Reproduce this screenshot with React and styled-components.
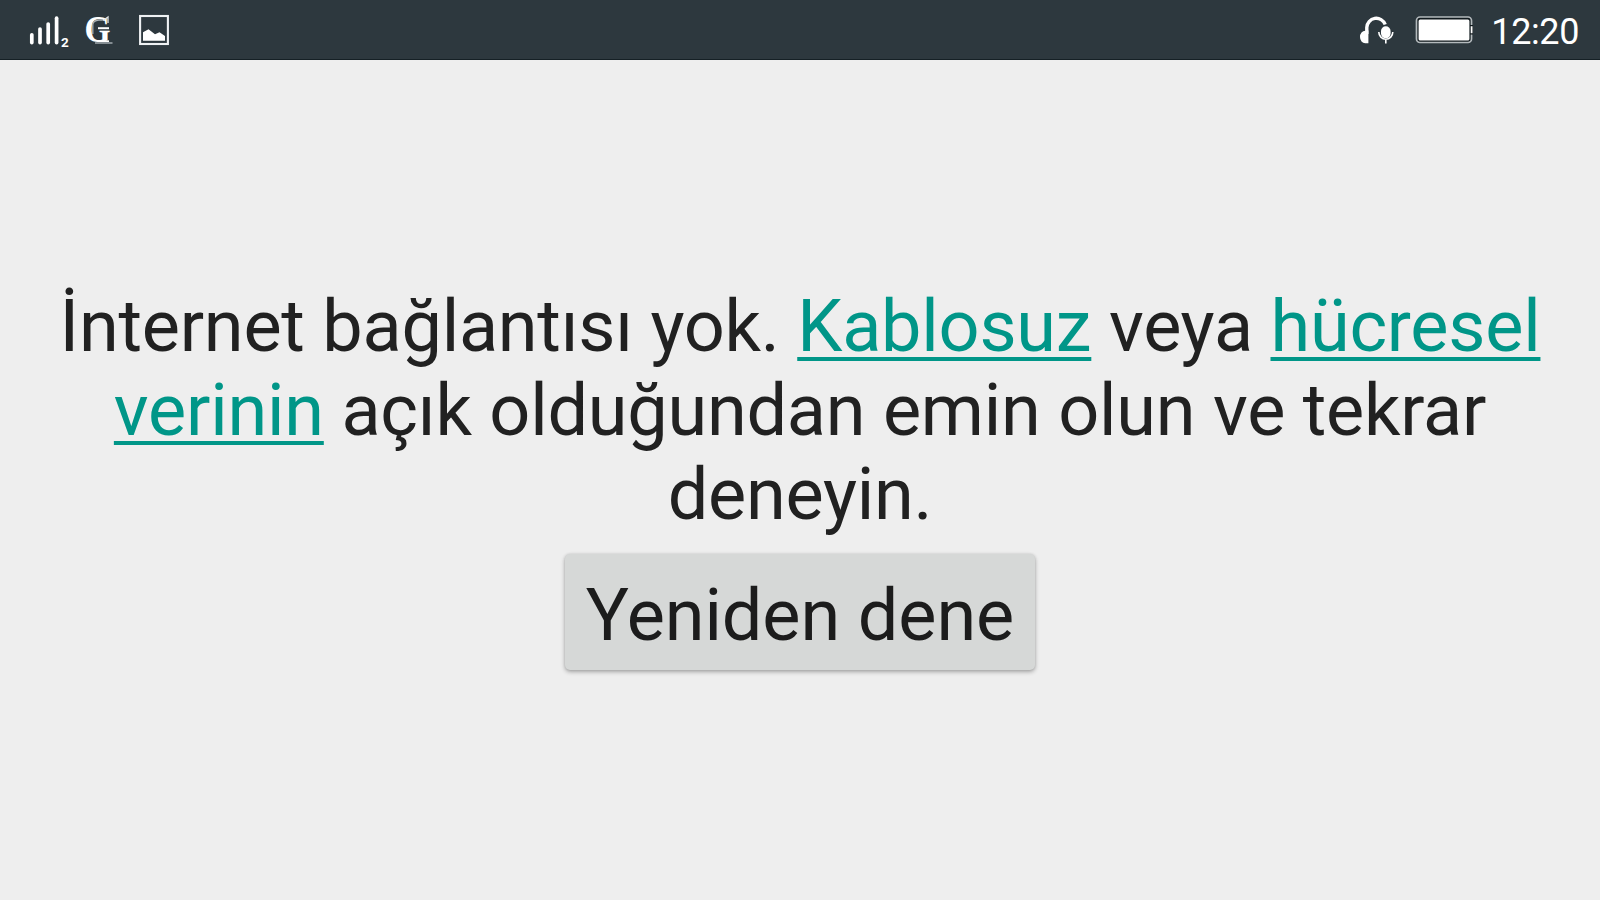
import React from "react";
import styled, { createGlobalStyle } from "styled-components";

export default function App() {
    return <>
        <GlobalStyle />
        <Screen>
            <StatusBar>
                <Notifications>
                    <SignalIcon />
                    <LogoIcon />
                    <PictureIcon />
                </Notifications>
                <System>
                    <HeadsetIcon />
                    <BatteryIcon />
                    <Clock>12:20</Clock>
                </System>
            </StatusBar>
            <Content>
                <Message>
                    İnternet bağlantısı yok. <Link href="#wifi">Kablosuz</Link> veya <Link href="#mobile">hücresel verinin</Link> açık olduğundan emin olun ve tekrar deneyin.
                </Message>
                <RetryButton type="button">Yeniden dene</RetryButton>
            </Content>
        </Screen>
    </>
}

function SignalIcon() {
    return <Icon width="44" height="40" viewBox="26 10 44 40">
        <g stroke="#fff" strokeWidth="3.7" strokeLinecap="round">
            <path d="M31.8 34.8V42.6" />
            <path d="M40 29V42.6" />
            <path d="M48.2 24V42.6" />
            <path d="M56.6 18.2V42.6" />
        </g>
        <text x="61" y="46.6" fill="#fff" fontFamily="Roboto, sans-serif" fontWeight="700" fontSize="13.5">2</text>
    </Icon>
}

function LogoIcon() {
    return <Icon width="36" height="48" viewBox="80 6 36 48">
        <text x="84.4" y="42.2" fill="#fff" fontFamily="'Liberation Serif', serif" fontWeight="700" fontSize="38" textLength="26" lengthAdjust="spacingAndGlyphs">G</text>
        <path d="M98 28.2h11" stroke="#fff" strokeWidth="2" />
        <path d="M98 41.2h11" stroke="#fff" strokeWidth="1.8" />
        <path d="M95 43h17.5" stroke="#9aa3a7" strokeWidth="1.6" />
        <path d="M92.8 34V24.5q.4-4 6-4.5h4" fill="none" stroke="#a9b1b4" strokeWidth="1.3" />
        <path d="M103 20.5l5-3.5v6" fill="none" stroke="#dfe3e5" strokeWidth="1.3" />
    </Icon>
}

function PictureIcon() {
    return <Icon width="30" height="40" viewBox="139 10 30 40">
        <rect x="140.1" y="16" width="27.8" height="28" fill="none" stroke="#eef1f3" strokeWidth="2.1" />
        <path d="M143 40.7V32.3L148.5 29.3L155 34.2L159.5 32.2L165 36V40.7Z" fill="#fff" />
    </Icon>
}

function HeadsetIcon() {
    return <Icon width="40" height="40" viewBox="1358 10 40 40">
        <path d="M1367.8 34V27.5a9.5 9.5 0 0 1 18.4-3" fill="none" stroke="#fff" strokeWidth="3.4" />
        <path d="M1369.4 30.5v12.7h-3.2a5.2 6.2 0 0 1 0-12.4Z" fill="#fff" />
        <rect x="1382" y="26.3" width="9.6" height="12" rx="4.8" fill="#fff" />
        <path d="M1379.8 32a7 7.2 0 0 0 14 0M1386.8 39V43.5" fill="none" stroke="#fff" strokeWidth="1.6" />
    </Icon>
}

function BatteryIcon() {
    return <Icon width="60" height="40" viewBox="1415 10 60 40">
        <rect x="1417.5" y="17" width="55" height="25.5" rx="3.5" fill="#10191d" stroke="#b4babd" strokeWidth="1.7" />
        <rect x="1419.6" y="19.4" width="50.8" height="21" rx="1.5" fill="#fff" />
        <path d="M1472.5 25V34.5" stroke="#10191d" strokeWidth="3" />
        <path d="M1472.6 26.2V33.3" stroke="#fff" strokeWidth="1.8" />
    </Icon>
}

const GlobalStyle = createGlobalStyle`
    body{
        margin: 0;
    }
`;

const Screen = styled.div`
    display: flex;
    flex-direction: column;
    height: 100vh;
    overflow: hidden;
    background-color: #eeeeee;
    color: #212121;
    font-family: Roboto, sans-serif;
`;

const StatusBar = styled.header`
    display: flex;
    justify-content: space-between;
    align-items: center;
    box-sizing: border-box;
    flex: none;
    height: 60px;
    padding: 0 21px 0 26px;
    background-color: #2d383e;
    border-bottom: 1px solid #152025;
`;

const Notifications = styled.div`
    display: flex;
    align-items: center;
    svg + svg{
        margin-left: 10px;
    }
    svg:last-child{
        margin-left: 23px;
    }
`;

const System = styled.div`
    display: flex;
    align-items: center;
    gap: 17px;
`;

const Icon = styled.svg`
    display: block;
    flex: none;
    margin-top: 1px;
    overflow: visible;
`;

const Clock = styled.span`
    color: #fff;
    font-size: 36px;
    line-height: 42px;
    letter-spacing: -0.4px;
    margin-top: 4px;
`;

const Content = styled.main`
    display: flex;
    flex-direction: column;
    align-items: center;
    padding: 225px 48px 0;
`;

const Message = styled.p`
    margin: 0;
    font-size: 72px;
    line-height: 84px;
    letter-spacing: -0.23px;
    text-align: center;
`;

const Link = styled.a`
    color: #009688;
    text-decoration: underline;
    text-decoration-thickness: 4px;
    text-underline-offset: 6px;
    text-decoration-skip-ink: none;
`;

const RetryButton = styled.button`
    width: 470px;
    height: 116px;
    margin-top: 17px;
    padding: 8px 0 0;
    border: none;
    border-radius: 5px;
    background-color: #d6d8d7;
    box-shadow: 0 2px 4px rgba(0, 0, 0, 0.3), 0 0 3px rgba(0, 0, 0, 0.1);
    color: #1c1c1c;
    font: 400 72px/84px Roboto, sans-serif;
    letter-spacing: -0.1px;
    cursor: pointer;
`;
